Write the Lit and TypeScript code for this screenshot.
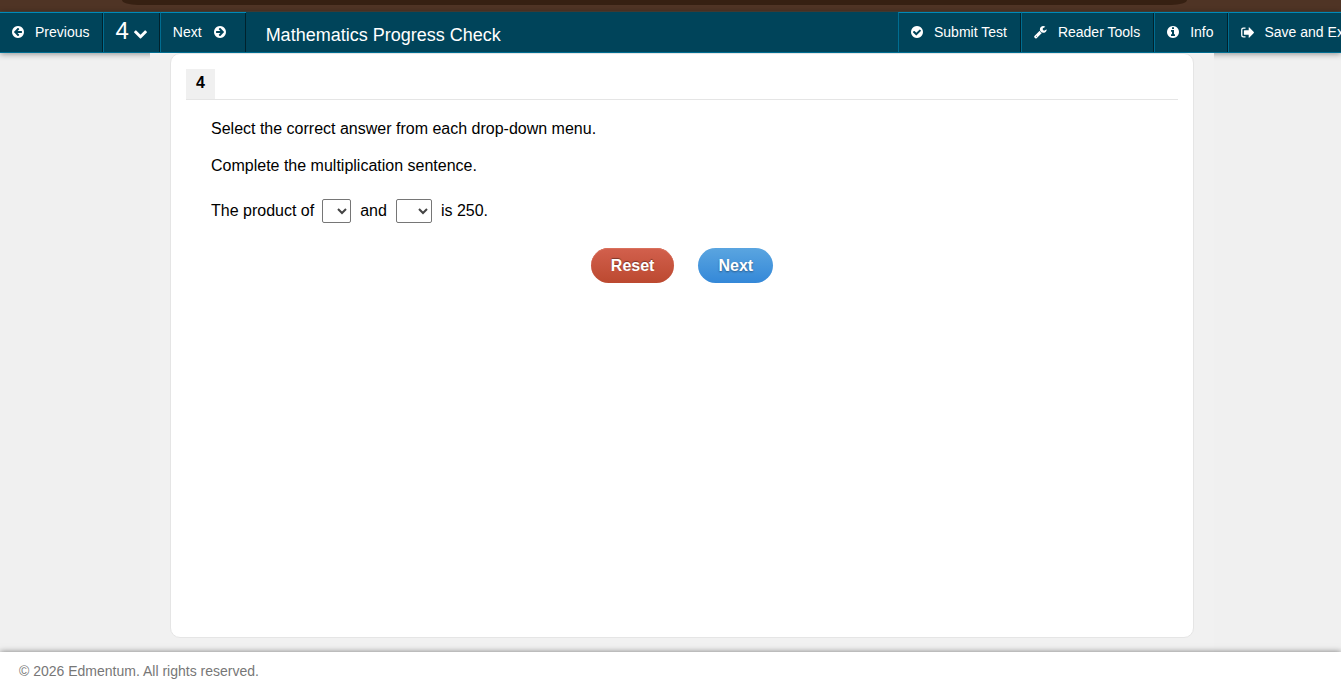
import { LitElement, html, css, svg } from "lit";
import { customElement } from "lit/decorators.js";

const DISC =
  "M1536 768q0 209-103 385.5t-279.5 279.5-385.5 103-385.5-103-279.5-279.5-103-385.5 103-385.5 279.5-279.5 385.5-103 385.5 103 279.5 279.5 103 385.5z";

const ICONS = {
  left: {
    box: "0 0 1536 1536",
    d: "M1280 832v-128q0-26-19-45t-45-19h-502l189-189q19-19 19-45t-19-45l-91-91q-18-18-45-18t-45 18l-362 362-91 91q-18 18-18 45t18 45l91 91 362 362q18 18 45 18t45-18l91-91q18-18 18-45t-18-45l-189-189h502q26 0 45-19t19-45z" + DISC,
  },
  check: {
    box: "0 0 1536 1536",
    d: "M1284 606q0-28-18-46l-91-90q-19-19-45-19t-45 19l-408 407-226-226q-19-19-45-19t-45 19l-91 90q-18 18-18 46 0 27 18 45l362 362q19 19 45 19 27 0 46-19l543-543q18-18 18-45z" + DISC,
  },
  info: {
    box: "0 0 1536 1536",
    d: "M1024 1248v-160q0-14-9-23t-23-9h-96v-512q0-14-9-23t-23-9h-320q-14 0-23 9t-9 23v160q0 14 9 23t23 9h96v320h-96q-14 0-23 9t-9 23v160q0 14 9 23t23 9h448q14 0 23-9t9-23zM896 352v-160q0-14-9-23t-23-9h-192q-14 0-23 9t-9 23v160q0 14 9 23t23 9h192q14 0 23-9t9-23z" + DISC,
  },
  wrench: {
    box: "64 128 1700 1700",
    d: "M448 1472q0-26-19-45t-45-19-45 19-19 45 19 45 45 19 45-19 19-45zm644-420l-682 682q-37 37-90 37-52 0-91-37l-106-108q-38-36-38-90 0-53 38-91l681-681q39 98 114.5 173.5t173.5 114.5zm634-435q0 39-23 106-47 134-164.5 217.5t-258.5 83.5q-185 0-316.5-131.5t-131.5-316.5 131.5-316.5 316.5-131.5q58 0 121.5 16.5t107.5 46.5q16 11 16 28t-16 28l-293 169v224l193 107q5-3 79-48.5t135.5-81 70.5-35.5q15 0 23.5 10t8.5 25z",
  },
  exit: {
    box: "0.5 0.5 13 13",
    d: "M5 1.900H2.900Q.6 1.900.6 4.200V9.800Q.6 12.100 2.900 12.100H5V10.800H3Q1.900 10.800 1.900 9.700V4.300Q1.900 3.200 3 3.200H5ZM4 4.700H8.200V2.100Q8.300 1.500 8.900 1.900L13.300 6.500Q13.600 7 13.300 7.500L8.900 12.100Q8.300 12.500 8.200 11.900V9.300H4Q3.400 9.300 3.400 8.700V5.300Q3.400 4.700 4 4.700Z",
  },
  down: {
    box: "90 128 1612 1612",
    d: "M1683 808l-742 741q-19 19-45 19t-45-19l-742-741q-19-19-19-45.5t19-45.5l166-165q19-19 45-19t45 19l531 531 531-531q19-19 45-19t45 19l166 165q19 19 19 45.5t-19 45.5z",
  },
};

function icon(name: keyof typeof ICONS, extra = "") {
  const { box, d } = ICONS[name];
  return html`<svg class="icon ${extra}" viewBox=${box} aria-hidden="true">${svg`<path fill-rule="evenodd" d=${d}></path>`}</svg>`;
}

@customElement("app-root")
export class AppRoot extends LitElement {
  static styles = css`
    :host {
      display: flex;
      flex-direction: column;
      min-height: 100vh;
      overflow: hidden;
      background: #f0f0f0;
      color: #000;
      font: 16px/21px "Liberation Sans", Arial, sans-serif;
    }
    * {
      box-sizing: border-box;
    }
    .strip {
      height: 12px;
      flex: none;
      padding: 0 154px 0 122px;
      background: #4f3425;
      border-bottom: 1px solid #4a4239;
    }
    .strip-tab {
      height: 5px;
      background: #362012;
      border-radius: 0 0 16px 16px / 0 0 5px 5px;
    }
    .bar {
      display: flex;
      flex: none;
      height: 41px;
      background: #00445a;
      border-bottom: 1px solid #006d91;
      box-shadow: 0 1px 6px rgba(0, 0, 0, 0.4);
      white-space: nowrap;
    }
    .bar button {
      display: flex;
      flex: none;
      align-items: center;
      gap: 11px;
      height: 40px;
      margin: 0;
      padding: 0 14px 1px 12px;
      border: 0 solid #006d91;
      border-top: 1px solid #008ab8;
      border-left-width: 1px;
      box-shadow: inset -1px 0 #00222d;
      background: none;
      color: #fff;
      font: 14px/20px "Liberation Sans", Arial, sans-serif;
      cursor: pointer;
    }
    .bar .first {
      border-left-width: 0;
    }
    .bar .number {
      gap: 5px;
      padding: 0 13px 1px 11px;
      font-size: 24px;
    }
    .bar .after {
      gap: 12px;
      padding-right: 20px;
    }
    .number .label {
      padding-bottom: 2px;
    }
    .number .icon {
      margin-top: 3px;
    }
    .icon {
      display: block;
      flex: none;
      width: 12px;
      height: 12px;
      fill: currentColor;
    }
    .icon.big {
      width: 13px;
      height: 13px;
    }
    h1 {
      flex: 1 0 auto;
      margin: 0;
      padding-left: 20px;
      color: #fff;
      font-size: 18px;
      font-weight: 400;
      line-height: 46px;
    }
    .tools {
      display: flex;
      flex: none;
      width: 443px;
    }
    main {
      position: relative;
      display: flex;
      flex: 1;
      margin: 0 127px 0 150px;
      padding: 0 20px 14px;
      background: #f1f1f1;
    }
    .card {
      flex: 1;
      padding: 15px;
      background: #fff;
      border: 1px solid #e5e5e5;
      border-radius: 10px;
    }
    .card-head {
      display: flex;
      border-bottom: 1px solid #e5e5e5;
    }
    .card-head h2 {
      margin: 0;
      padding: 0 10px 2px;
      background: #f0f0f0;
      font-size: 16px;
      line-height: 28px;
    }
    .question {
      padding: 18px 25px 0;
    }
    p {
      margin: 0 0 16px;
    }
    .sentence {
      display: flex;
      align-items: center;
      margin: 23px 0 0;
      line-height: 22px;
    }
    select {
      height: 24px;
      margin: 0 9px 0 8px;
      padding: 0;
      border: 1px solid #767676;
      border-radius: 2px;
      background: #fff;
      color: #444;
      font: 16px "Liberation Sans", Arial, sans-serif;
    }
    .narrow {
      width: 29px;
    }
    .wide {
      width: 36px;
      margin-left: 9px;
    }
    .actions {
      display: flex;
      justify-content: center;
      gap: 24px;
      padding-top: 25px;
    }
    .pill {
      height: 35px;
      margin: 0;
      padding: 0 20px;
      border: 0;
      border-radius: 18px;
      color: #fff;
      font: bold 16px/35px "Liberation Sans", Arial, sans-serif;
      cursor: pointer;
    }
    .reset {
      background: linear-gradient(#d2604d, #bc4930);
      box-shadow: inset 0 1px #d9705c;
      text-shadow: 0 -1px 1px rgba(0, 0, 0, 0.4);
    }
    .next {
      background: linear-gradient(#5aa5e0, #3488d8);
      text-shadow: 0 1px 2px rgba(0, 0, 0, 0.4);
    }
    footer {
      position: relative;
      flex: none;
      height: 40px;
      padding: 0 19px;
      background: #fff;
      box-shadow: 0 0 6px rgba(0, 0, 0, 0.5);
      color: #777;
      font-size: 14px;
      line-height: 38px;
    }
  `;

  render() {
    return html`
      <div class="strip"><div class="strip-tab"></div></div>
      <header class="bar">
        <button type="button" class="first">${icon("left")}<span>Previous</span></button>
        <button type="button" class="number"><span class="label">4</span>${icon("down", "big")}</button>
        <button type="button" class="after">
          <span>Next</span>
          <svg class="icon" viewBox="0 0 1536 1536" aria-hidden="true">
            <path fill-rule="evenodd" transform="translate(1536 0) scale(-1 1)" d=${ICONS.left.d}></path>
          </svg>
        </button>
        <h1>Mathematics Progress Check</h1>
        <div class="tools">
          <button type="button">${icon("check")}<span>Submit Test</span></button>
          <button type="button">${icon("wrench", "big")}<span>Reader Tools</span></button>
          <button type="button">${icon("info")}<span>Info</span></button>
          <button type="button">${icon("exit", "big")}<span>Save and Exit</span></button>
        </div>
      </header>
      <main>
        <section class="card">
          <div class="card-head"><h2>4</h2></div>
          <div class="question">
            <p>Select the correct answer from each drop-down menu.</p>
            <p>Complete the multiplication sentence.</p>
            <div class="sentence">
              <span id="lead">The product of</span>
              <select class="narrow" aria-labelledby="lead"></select>
              <span id="joint">and</span>
              <select class="wide" aria-labelledby="joint"></select>
              <span>is 250.</span>
            </div>
          </div>
          <div class="actions">
            <button type="button" class="pill reset">Reset</button>
            <button type="button" class="pill next">Next</button>
          </div>
        </section>
      </main>
      <footer>© 2026 Edmentum. All rights reserved.</footer>
    `;
  }
}
